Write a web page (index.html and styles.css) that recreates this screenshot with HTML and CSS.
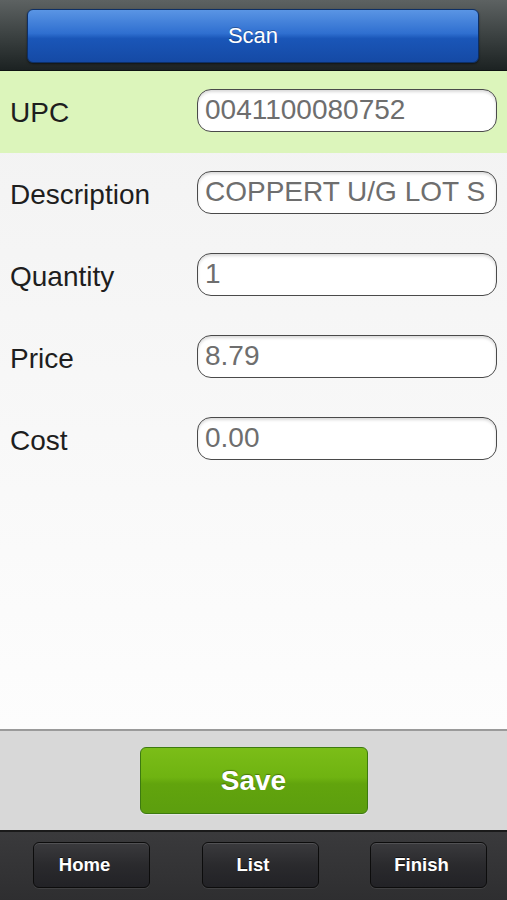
FILE: index.html
```html
<!DOCTYPE html>
<html>
<head>
<meta charset="utf-8">
<link rel="stylesheet" href="styles.css">
</head>
<body>
<div class="app">
  <header class="header">
    <button class="scan-btn">Scan</button>
  </header>
  <main class="form">
    <div class="row row-active">
      <label class="label">UPC</label>
      <div class="field">0041100080752</div>
    </div>
    <div class="row">
      <label class="label">Description</label>
      <div class="field">COPPERT U/G LOT S</div>
    </div>
    <div class="row">
      <label class="label">Quantity</label>
      <div class="field">1</div>
    </div>
    <div class="row">
      <label class="label">Price</label>
      <div class="field">8.79</div>
    </div>
    <div class="row">
      <label class="label">Cost</label>
      <div class="field">0.00</div>
    </div>
  </main>
  <section class="actions">
    <button class="save-btn">Save</button>
  </section>
  <nav class="tabbar">
    <button class="tab-btn">Home</button>
    <button class="tab-btn">List</button>
    <button class="tab-btn">Finish</button>
  </nav>
</div>
</body>
</html>
```

FILE: styles.css
```css
* { box-sizing: border-box; }
html, body { margin: 0; padding: 0; }
body {
  font-family: "Liberation Sans", Arial, sans-serif;
  width: 507px;
  height: 900px;
  overflow: hidden;
}
.app {
  display: flex;
  flex-direction: column;
  height: 900px;
}
.header {
  height: 71px;
  padding: 9px 28px 7px 27px;
  background: linear-gradient(#5d6262 0%, #3c4242 50%, #1c2222 100%);
  border-bottom: 1px solid #0f1313;
  display: flex;
}
.scan-btn {
  flex: 1;
  border: 1px solid #0d2f66;
  border-radius: 6px;
  background: linear-gradient(#5a95e4 0%, #2f6fd0 45%, #1a56b8 55%, #154aa5 100%);
  color: #fff;
  font-family: "Liberation Sans", Arial, sans-serif;
  font-size: 22px;
  padding: 0;
  box-shadow: 0 1px 2px rgba(0,0,0,0.5);
  text-shadow: 0 -1px 0 rgba(0,0,0,0.3);
}
.form {
  flex: 1;
  background: linear-gradient(#f2f2f2 0%, #f8f8f8 55%, #fdfdfd 100%);
}
.row {
  height: 82px;
  display: flex;
  align-items: center;
  padding: 0 10px 0 10px;
}
.row-active {
  background: #dcf5bb;
}
.label {
  width: 187px;
  font-size: 28px;
  color: #1e1e1e;
  padding-top: 2px;
}
.field {
  width: 300px;
  height: 43px;
  margin-top: -3px;
  border: 1.5px solid #4a4a4a;
  border-radius: 14px;
  background: #fff;
  box-shadow: inset 0 2px 3px rgba(0,0,0,0.15);
  font-size: 28px;
  color: #6e6e6e;
  line-height: 40px;
  padding: 0 0 0 7px;
  white-space: nowrap;
  overflow: hidden;
}
.actions {
  height: 101px;
  background: #d8d8d8;
  border-top: 2px solid #9a9a9a;
  display: flex;
  justify-content: center;
  padding-top: 16px;
}
.save-btn {
  width: 228px;
  height: 67px;
  border: 1px solid #3d7a10;
  border-radius: 6px;
  background: linear-gradient(#7bbd18 0%, #6fb311 45%, #62a40d 55%, #5c9e0e 100%);
  color: #fff;
  font-family: "Liberation Sans", Arial, sans-serif;
  font-weight: bold;
  font-size: 28px;
  padding: 0;
  text-shadow: 0 -1px 1px rgba(0,0,0,0.35);
  box-shadow: 0 1px 1px rgba(255,255,255,0.4);
}
.tabbar {
  height: 70px;
  background: linear-gradient(#3a3a3c 0%, #2e2e30 100%);
  border-top: 2px solid #1a1a1a;
  display: flex;
  justify-content: space-between;
  padding: 10px 20px 0 33px;
  align-items: flex-start;
}
.tab-btn {
  width: 117px;
  height: 46px;
  border: 1px solid #0c0c0c;
  border-radius: 6px;
  background: linear-gradient(#3a3a3d 0%, #2a2a2d 50%, #222226 100%);
  box-shadow: inset 0 1px 0 rgba(255,255,255,0.12), 0 1px 0 rgba(255,255,255,0.08);
  color: #fff;
  font-family: "Liberation Sans", Arial, sans-serif;
  font-weight: bold;
  font-size: 18.5px;
  padding: 0 14px 0 0;
  text-shadow: 0 -1px 0 rgba(0,0,0,0.6);
}
```
